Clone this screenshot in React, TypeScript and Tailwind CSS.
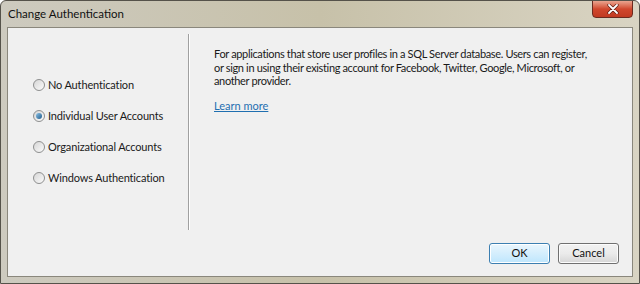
import React from "react";

function Radio({ label, checked }: { label: string; checked?: boolean }) {
  return (
    <div className="flex items-center h-[13px] whitespace-nowrap">
      <div className="w-[12px] h-[12px] rounded-full border border-[#8e8f8f] bg-gradient-to-br from-[#d6d6d6] to-[#fbfbfb] flex items-center justify-center shrink-0">
        {checked && (
          <div className="w-[6px] h-[6px] rounded-full bg-gradient-to-br from-[#8cc2e6] to-[#1e5c8c]" />
        )}
      </div>
      <span className="ml-[3px] text-[11px] tracking-[-0.15px] text-[#1a1a1a] leading-[13px]">{label}</span>
    </div>
  );
}

export default function App() {
  return (
    <div
      className="w-[640px] h-[284px] relative overflow-hidden bg-gradient-to-r from-[#cdcabf] via-[#c7c1a9] to-[#d9d4c3] border border-[#55524a] rounded-t-[6px]"
      style={{ fontFamily: 'Lato, "Noto Sans", sans-serif' }}
    >
      <div className="h-[26px] flex items-center pl-[7px] relative">
        <span className="text-[11.5px] text-[#111] leading-none">Change Authentication</span>
        <div className="absolute top-[-1px] right-[6px] w-[41px] h-[18px] rounded-b-[4px] border border-[#6b2a1f] bg-gradient-to-b from-[#e9a48f] via-[#d0472d] to-[#c13a22] flex items-center justify-center">
          <svg width="12" height="10" viewBox="0 0 12 10">
            <path d="M2 1 L10 9 M10 1 L2 9" stroke="#5a1a10" strokeWidth="3.2" strokeLinecap="round" />
            <path d="M2 1 L10 9 M10 1 L2 9" stroke="#ffffff" strokeWidth="1.8" strokeLinecap="round" />
          </svg>
        </div>
      </div>
      <div className="mx-[6px] h-[250px] border border-[#8a877c] bg-[#f0f0f0] flex flex-col">
        <div className="flex flex-1">
          <div className="w-[180px] pl-[25px] pt-[50px] flex flex-col gap-[18px]">
            <Radio label="No Authentication" />
            <Radio label="Individual User Accounts" checked />
            <Radio label="Organizational Accounts" />
            <Radio label="Windows Authentication" />
          </div>
          <div className="mt-[6px] h-[196px] w-[2px] flex">
            <div className="w-[1px] bg-[#a0a0a0]" />
            <div className="w-[1px] bg-white" />
          </div>
          <div className="pl-[24px] pt-[19px] pr-[10px] flex-1">
            <p className="text-[11px] tracking-[-0.35px] leading-[13.5px] text-[#1a1a1a] whitespace-nowrap">
              For applications that store user profiles in a SQL Server database. Users can register,
              <br />
              or sign in using their existing account for Facebook, Twitter, Google, Microsoft, or
              <br />
              another provider.
            </p>
            <a className="block mt-[11px] text-[11px] leading-[14px] text-[#1f6fb0] underline">Learn more</a>
          </div>
        </div>
        <div className="flex justify-end gap-[8px] pr-[13px] pb-[12px]">
          <button className="w-[61px] h-[21px] rounded-[3px] border border-[#3c7fb1] bg-gradient-to-b from-[#eaf6fd] to-[#bee6fd] text-[11px] text-[#111] shadow-[inset_0_0_0_1px_#fff]">
            OK
          </button>
          <button className="w-[61px] h-[21px] rounded-[3px] border border-[#707070] bg-gradient-to-b from-[#f2f2f2] via-[#ebebeb] to-[#d6d6d6] text-[11px] text-[#111] shadow-[inset_0_0_0_1px_#fcfcfc]">
            Cancel
          </button>
        </div>
      </div>
    </div>
  );
}
